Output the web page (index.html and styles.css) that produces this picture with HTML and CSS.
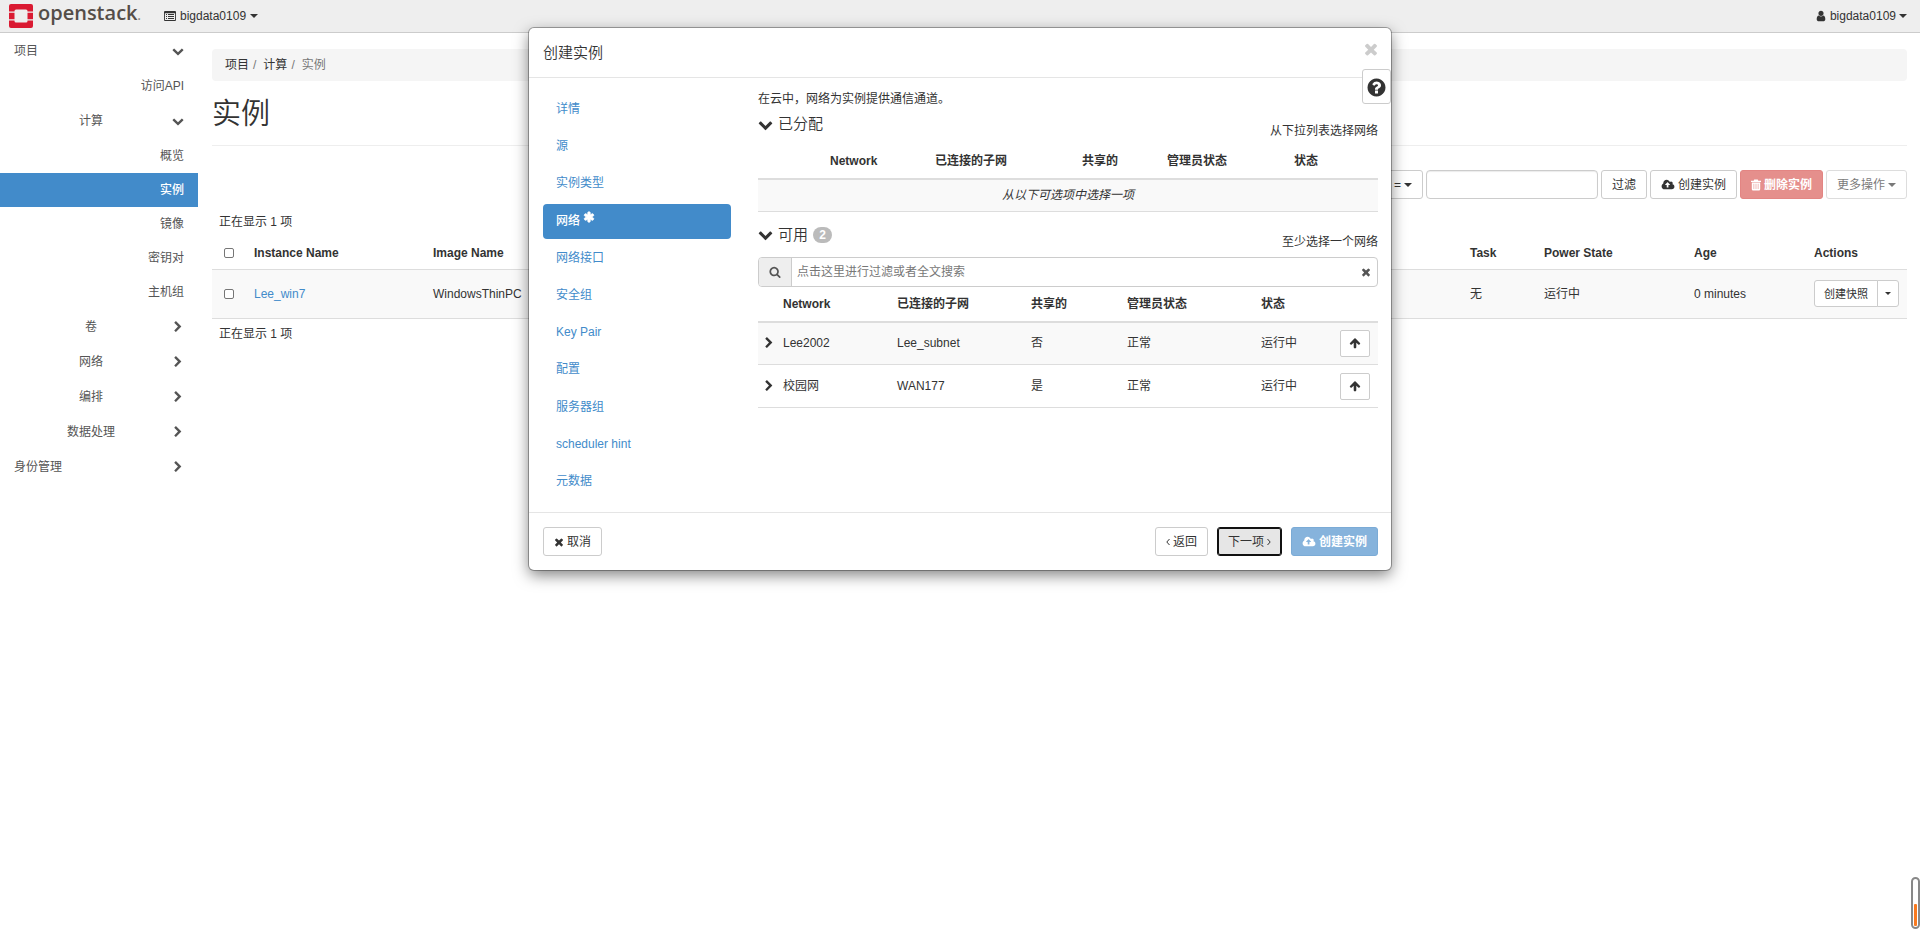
FILE: index.html
```html
<!DOCTYPE html>
<html lang="zh-CN">
<head>
<meta charset="utf-8">
<title>实例 - OpenStack Dashboard</title>
<link rel="stylesheet" href="styles.css">
</head>
<body>
<svg class="sprite" aria-hidden="true">
  <symbol id="down" viewBox="0 0 1792 1792"><path d="M1683 808l-742 741q-19 19-45 19t-45-19l-742-741q-19-19-19-45.500t19-45.500l166-165q19-19 45-19t45 19l531 531 531-531q19-19 45-19t45 19l166 165q19 19 19 45.500t-19 45.500z"/></symbol>
  <symbol id="right" viewBox="0 0 1792 1792"><path d="M1363 877l-742 742q-19 19-45 19t-45-19l-166-166q-19-19-19-45t19-45l531-531-531-531q-19-19-19-45t19-45l166-166q19-19 45-19t45 19l742 742q19 19 19 45t-19 45z"/></symbol>
  <symbol id="times" viewBox="0 0 1792 1792"><path d="M1490 1322q0 40-28 68l-136 136q-28 28-68 28t-68-28l-294-294-294 294q-28 28-68 28t-68-28l-136-136q-28-28-28-68t28-68l294-294-294-294q-28-28-28-68t28-68l136-136q28-28 68-28t68 28l294 294 294-294q28-28 68-28t68 28l136 136q28 28 28 68t-28 68l-294 294 294 294q28 28 28 68z"/></symbol>
  <symbol id="search" viewBox="0 0 1792 1792"><path d="M1216 832q0-185-131.500-316.500t-316.500-131.500-316.500 131.500-131.500 316.500 131.500 316.500 316.500 131.500 316.500-131.500 131.500-316.500zm512 832q0 52-38 90t-90 38q-54 0-90-38l-343-342q-179 124-399 124-143 0-273.500-55.500t-225-150-150-225-55.500-273.500 55.500-273.500 150-225 225-150 273.500-55.500 273.500 55.500 225 150 150 225 55.500 273.500q0 220-124 399l343 343q37 37 37 90z"/></symbol>
  <symbol id="up" viewBox="0 0 1792 1792"><path d="M1675 971q0 51-37 90l-75 75q-38 38-91 38-54 0-90-38l-294-293v704q0 52-37.500 84.500t-90.500 32.500h-128q-53 0-90.500-32.500t-37.500-84.500v-704l-294 293q-36 38-90 38t-90-38l-75-75q-38-38-38-90 0-53 38-91l651-651q35-37 90-37 54 0 91 37l651 651q37 39 37 91z"/></symbol>
  <symbol id="asterisk" viewBox="0 0 1792 1792"><path stroke="currentColor" stroke-width="100" d="M1546 1050q46 26 59.500 77.500t-12.500 97.500l-64 110q-26 46-77.500 59.500t-97.500-12.500l-266-153v307q0 52-38 90t-90 38h-128q-52 0-90-38t-38-90v-307l-266 153q-46 26-97.500 12.500t-77.500-59.500l-64-110q-26-46-12.500-97.500t59.500-77.500l266-154-266-154q-46-26-59.500-77.500t12.500-97.500l64-110q26-46 77.500-59.500t97.500 12.500l266 153v-307q0-52 38-90t90-38h128q52 0 90 38t38 90v307l266-153q46-26 97.500-12.500t77.500 59.500l64 110q26 46 12.500 97.500t-59.500 77.500l-266 154z"/></symbol>
  <symbol id="question" viewBox="0 0 1792 1792"><path d="M1024 1376v-192q0-14-9-23t-23-9h-192q-14 0-23 9t-9 23v192q0 14 9 23t23 9h192q14 0 23-9t9-23zm256-672q0-88-55.500-163t-138.500-116-170-41q-243 0-371 213-15 24 8 42l132 100q7 6 19 6 16 0 25-12 53-68 86-92 34-24 86-24 48 0 85.500 26t37.500 59q0 38-20 61t-68 45q-63 28-115.500 86.500t-52.500 125.500v36q0 14 9 23t23 9h192q14 0 23-9t9-23q0-19 21.500-49.500t54.500-49.500q32-18 49-28.500t46-35 44.500-48 28-60.500 12.500-81zm384 192q0 209-103 385.500t-279.500 279.500-385.500 103-385.500-103-279.500-279.500-103-385.500 103-385.500 279.500-279.500 385.500-103 385.500 103 279.500 279.500 103 385.500z"/></symbol>
  <symbol id="user" viewBox="0 0 1792 1792"><path d="M1536 1399q0 109-62.500 187t-150.500 78h-854q-88 0-150.500-78t-62.500-187q0-85 8.500-160.500t31.500-152 58.500-131 94-89 134.500-34.500q131 128 313 128t313-128q76 0 134.500 34.500t94 89 58.500 131 31.500 152 8.500 160.500zm-256-887q0 159-112.500 271.500t-271.500 112.500-271.500-112.500-112.500-271.500 112.500-271.500 271.500-112.500 271.500 112.500 112.500 271.500z"/></symbol>
  <symbol id="cloud" viewBox="0 0 1920 1792"><path d="M1280 864q0-14-9-23l-352-352q-9-9-23-9t-23 9l-351 351q-10 12-10 24 0 14 9 23t23 9h224v352q0 13 9.500 22.500t22.500 9.500h192q13 0 22.500-9.500t9.500-22.500v-352h224q13 0 22.500-9.500t9.500-22.500zm640 288q0 159-112.500 271.500t-271.500 112.500h-1088q-185 0-316.500-131.500t-131.500-316.500q0-130 70-240t188-165q-2-30-2-43 0-212 150-362t362-150q156 0 285.500 87t188.500 231q71-62 166-62 106 0 181 75t75 181q0 76-41 138 130 31 213.500 135.500t83.500 238.500z"/></symbol>
  <symbol id="trash" viewBox="0 0 12 12"><path fill-rule="evenodd" d="M4.200.5h3.600l.5 1.300H11v1.300H1V1.800h2.700zM1.800 3.500h8.400v6.700a1.300 1.300 0 0 1-1.300 1.300H3.100a1.300 1.300 0 0 1-1.300-1.300zM3.600 4.700V10h.6V4.700zM5.700 4.700V10h.6V4.700zM7.800 4.700V10h.6V4.700z"/></symbol>
  <symbol id="list" viewBox="0 0 12 10"><path fill-rule="evenodd" d="M1 0h10a1 1 0 0 1 1 1v8a1 1 0 0 1-1 1H1a1 1 0 0 1-1-1V1a1 1 0 0 1 1-1zM.9 2.300v6.600h10.200V2.300zM2 3.100h1v1H2zM4 3.100h6v1H4zM2 5.100h1v1H2zM4 5.100h6v1H4zM2 7.100h1v1H2zM4 7.100h6v1H4z"/></symbol>
  <symbol id="angle-left" viewBox="0 0 4 8"><path d="M3.500 1L.8 4l2.700 3" fill="none" stroke="currentColor"/></symbol>
  <symbol id="angle-right" viewBox="0 0 4 8"><path d="M.5 1l2.700 3L.5 7" fill="none" stroke="currentColor"/></symbol>
</svg>

<header class="topbar">
  <a class="brand" href="#">
    <svg class="brand-mark" viewBox="0 0 24 24" aria-hidden="true"><path fill="#da1a32" d="M2 0h20a2 2 0 0 1 2 2v5.500h-5.500V7a1.500 1.500 0 0 0-1.500-1.500H7A1.500 1.500 0 0 0 5.500 7v.5H0V2a2 2 0 0 1 2-2zM0 8.700h5.500v6.600H0zM18.500 8.700H24v6.600h-5.500zM0 16.500h5.500v.5A1.500 1.500 0 0 0 7 18.500h10a1.500 1.500 0 0 0 1.500-1.500v-.5H24V22a2 2 0 0 1-2 2H2a2 2 0 0 1-2-2z"/></svg>
    <span>openstack<small>.</small></span>
  </a>
  <button class="menu"><svg class="list-icon"><use href="#list"/></svg>bigdata0109<i class="caret"></i></button>
  <button class="menu user"><svg class="icon"><use href="#user"/></svg>bigdata0109<i class="caret"></i></button>
</header>

<div class="page">
  <nav class="sidebar" aria-label="主导航">
    <button class="row top"><span>项目</span><svg class="icon"><use href="#down"/></svg></button>
    <a class="row leaf" href="#">访问API</a>
    <button class="row group"><span>计算</span><svg class="icon"><use href="#down"/></svg></button>
    <a class="row leaf" href="#">概览</a>
    <a class="row leaf sub active" href="#">实例</a>
    <a class="row leaf sub" href="#">镜像</a>
    <a class="row leaf sub" href="#">密钥对</a>
    <a class="row leaf sub" href="#">主机组</a>
    <button class="row group"><span>卷</span><svg class="icon"><use href="#right"/></svg></button>
    <button class="row group"><span>网络</span><svg class="icon"><use href="#right"/></svg></button>
    <button class="row group"><span>编排</span><svg class="icon"><use href="#right"/></svg></button>
    <button class="row group"><span>数据处理</span><svg class="icon"><use href="#right"/></svg></button>
    <button class="row top"><span>身份管理</span><svg class="icon"><use href="#right"/></svg></button>
  </nav>

  <main class="content">
    <ol class="breadcrumb"><li><a href="#">项目</a></li><li><a href="#">计算</a></li><li>实例</li></ol>
    <h1>实例</h1>
    <div class="toolbar">
      <button class="btn">实例名称 =<i class="caret"></i></button>
      <input class="field" type="text" aria-label="过滤条件">
      <button class="btn">过滤</button>
      <button class="btn"><svg class="cloud-icon"><use href="#cloud"/></svg>创建实例</button>
      <button class="btn danger" disabled><svg class="icon"><use href="#trash"/></svg>删除实例</button>
      <button class="btn faded" disabled>更多操作<i class="caret"></i></button>
    </div>
    <p class="count">正在显示 1 项</p>
    <table class="instances">
      <colgroup><col class="c-check"><col class="c-name"><col><col class="c-task"><col class="c-power"><col class="c-age"><col class="c-actions"></colgroup>
      <thead><tr><th><input type="checkbox" aria-label="全选"></th><th>Instance Name</th><th>Image Name</th><th>Task</th><th>Power State</th><th>Age</th><th>Actions</th></tr></thead>
      <tbody><tr><td><input type="checkbox" aria-label="选择 Lee_win7"></td><td><a href="#">Lee_win7</a></td><td>WindowsThinPC</td><td>无</td><td>运行中</td><td>0 minutes</td><td><div class="split"><button class="btn small">创建快照</button><button class="btn small toggle" aria-label="更多"><i class="caret"></i></button></div></td></tr></tbody>
    </table>
    <p class="count">正在显示 1 项</p>
  </main>
</div>

<section class="modal" role="dialog" aria-labelledby="dialog-title">
  <header class="modal-head">
    <h2 id="dialog-title">创建实例</h2>
    <button class="close" aria-label="关闭"><svg class="close-icon"><use href="#times"/></svg></button>
  </header>
  <button class="help" aria-label="帮助"><svg class="help-icon"><use href="#question"/></svg></button>
  <div class="modal-body">
    <nav class="steps" aria-label="步骤">
      <a href="#">详情</a>
      <a href="#">源</a>
      <a href="#">实例类型</a>
      <a href="#" class="current">网络<svg class="star"><use href="#asterisk"/></svg></a>
      <a href="#">网络接口</a>
      <a href="#">安全组</a>
      <a href="#">Key Pair</a>
      <a href="#">配置</a>
      <a href="#">服务器组</a>
      <a href="#">scheduler hint</a>
      <a href="#">元数据</a>
    </nav>
    <div class="step">
      <p class="intro">在云中，网络为实例提供通信通道。</p>
      <div class="section-head"><h3><svg class="big-icon"><use href="#down"/></svg>已分配</h3><span>从下拉列表选择网络</span></div>
      <table class="networks allocated">
        <colgroup><col class="a-lead"><col class="a-net"><col class="a-subnet"><col class="a-shared"><col class="a-admin"><col></colgroup>
        <thead><tr><th></th><th>Network</th><th>已连接的子网</th><th>共享的</th><th>管理员状态</th><th>状态</th></tr></thead>
        <tbody><tr><td colspan="6" class="empty">从以下可选项中选择一项</td></tr></tbody>
      </table>
      <div class="section-head"><h3><svg class="big-icon"><use href="#down"/></svg>可用<span class="badge">2</span></h3><span>至少选择一个网络</span></div>
      <div class="search">
        <span class="addon"><svg class="icon"><use href="#search"/></svg></span>
        <input type="text" placeholder="点击这里进行过滤或者全文搜索" aria-label="搜索网络">
        <button class="clear" aria-label="清除"><svg class="icon"><use href="#times"/></svg></button>
      </div>
      <table class="networks available">
        <colgroup><col class="b-lead"><col class="b-net"><col class="b-subnet"><col class="b-shared"><col class="b-admin"><col><col class="b-action"></colgroup>
        <thead><tr><th></th><th>Network</th><th>已连接的子网</th><th>共享的</th><th>管理员状态</th><th>状态</th><th></th></tr></thead>
        <tbody>
          <tr><td><svg class="icon"><use href="#right"/></svg></td><td>Lee2002</td><td>Lee_subnet</td><td>否</td><td>正常</td><td>运行中</td><td><button class="btn arrow" aria-label="分配 Lee2002"><svg class="icon"><use href="#up"/></svg></button></td></tr>
          <tr><td><svg class="icon"><use href="#right"/></svg></td><td>校园网</td><td>WAN177</td><td>是</td><td>正常</td><td>运行中</td><td><button class="btn arrow" aria-label="分配 校园网"><svg class="icon"><use href="#up"/></svg></button></td></tr>
        </tbody>
      </table>
    </div>
  </div>
  <footer class="modal-foot">
    <button class="btn cancel"><svg class="icon"><use href="#times"/></svg>取消</button>
    <button class="btn"><svg class="angle"><use href="#angle-left"/></svg>返回</button>
    <button class="btn next">下一项<svg class="angle"><use href="#angle-right"/></svg></button>
    <button class="btn primary" disabled><svg class="cloud-icon"><use href="#cloud"/></svg>创建实例</button>
  </footer>
</section>

<div class="gauge" aria-hidden="true"><i></i></div>
</body>
</html>
```
FILE: styles.css
```css
* { box-sizing: border-box; }
body {
  margin: 0;
  color: #333;
  background: #fff;
  font: 12px/18px "Liberation Sans", "Noto Sans CJK SC", sans-serif;
}
button, input { font: inherit; color: inherit; }
button { margin: 0; padding: 0; border: 0; background: none; cursor: pointer; }
a { color: #428bca; text-decoration: none; }
h1, h2, h3, p { margin: 0; font-weight: normal; }
h1, h2, h3 { font-weight: 350; }
svg { fill: currentColor; flex: none; display: block; }
.sprite { position: absolute; width: 0; height: 0; }
.icon { width: 12px; height: 12px; }
.cloud-icon { width: 14px; height: 12px; }
.caret { border: 4px solid transparent; border-top-color: currentColor; border-bottom: 0; }

.topbar {
  display: flex;
  align-items: center;
  height: 33px;
  padding: 0 13px 0 9px;
  background: #eee;
  border-bottom: 1px solid #ccc;
}
.brand { display: flex; align-items: center; gap: 5px; width: 155px; height: 32px; color: #554d48; font: 600 20px/24px "Open Sans", sans-serif; }
.brand span { padding-bottom: 3px; }
.brand small { color: #8a8480; font-size: 12px; }
.brand-mark { width: 24px; height: 24px; }
.menu { display: flex; align-items: center; gap: 4px; height: 26px; }
.list-icon { width: 12px; height: 10px; }
.user { margin-left: auto; gap: 3px; }

.page { display: flex; }
.sidebar { display: flex; flex-direction: column; flex: none; width: 198px; }
.row { display: flex; align-items: center; height: 35px; padding: 0 14px; color: #555; }
.top { justify-content: space-between; }
.group { padding-left: 10px; }
.group span { flex: 1; text-align: center; }
.leaf { justify-content: flex-end; }
.sub { height: 34px; }
.active { color: #fff; background: #428bca; font-weight: 500; }

.content { flex: 1; min-width: 0; padding: 16px 13px 0 14px; }
.breadcrumb { display: flex; margin: 0; padding: 7px 13px; list-style: none; color: #777; background: #f5f5f5; border-radius: 4px; }
.breadcrumb a { color: #333; }
.breadcrumb li + li::before { content: "/"; padding: 0 7px 0 4px; color: #777; }
h1 { padding: 11px 0 9px; font-size: 29px; line-height: 44px; border-bottom: 1px solid #eee; }
.toolbar { display: flex; justify-content: flex-end; gap: 3px; margin: 24px 0 14px; }
.btn {
  display: flex;
  align-items: center;
  justify-content: center;
  gap: 3px;
  height: 29px;
  padding: 0 10px;
  border: 1px solid #ccc;
  border-radius: 3px;
  background: #fff;
}
.btn .icon { margin: 0 -1px; }
.field { width: 172px; height: 29px; border: 1px solid #ccc; border-radius: 4px; box-shadow: inset 0 1px 1px rgba(0, 0, 0, .08); }
.danger { color: #fff; background: #e58f8c; border-color: #e38583; font-weight: bold; }
.faded { opacity: .65; }
.count { padding: 0 7px; }

table { width: 100%; table-layout: fixed; border-collapse: collapse; }
th { font-weight: bold; text-align: left; white-space: nowrap; }
th, td { padding: 0 7px; }
tbody tr:nth-child(odd) { background: #f9f9f9; }
.instances thead tr { height: 38px; }
.instances tbody tr { height: 49px; }
.instances tr { border-bottom: 1px solid #ddd; }
.instances th { padding-top: 7px; }
.instances + .count { padding-top: 6px; }
.instances th:first-child, .instances td:first-child { padding-left: 12px; }
.instances input {
  display: block;
  appearance: none;
  width: 10px;
  height: 10px;
  margin: 0;
  border: 1px solid #767676;
  border-radius: 2px;
  background: #fff;
}
.c-check { width: 35px; }
.c-name { width: 179px; }
.c-task { width: 74px; }
.c-power { width: 150px; }
.c-age { width: 120px; }
.c-actions { width: 100px; }
.split { display: flex; }
.small { height: 27px; padding: 0 9px; font-size: 11px; border-radius: 3px 0 0 3px; white-space: nowrap; }
.toggle { width: 22px; padding: 0; margin-left: -1px; border-radius: 0 3px 3px 0; }
.toggle .caret { border-width: 3px; border-bottom: 0; }

.modal {
  position: absolute;
  top: 28px;
  left: 0;
  right: 0;
  width: 862px;
  margin: 0 auto;
  background: #fff;
  border-radius: 5px;
  box-shadow: 0 0 0 1px rgba(0, 0, 0, .3), 0 5px 15px rgba(0, 0, 0, .5);
}
.modal-head { display: flex; justify-content: space-between; padding: 14px 13px 14px 14px; border-bottom: 1px solid #e5e5e5; }
h2 { font-size: 15px; line-height: 21px; }
.close { display: flex; width: 14px; height: 14px; color: #ccc; }
.close-icon { width: 18px; height: 18px; margin: -2px; }
.help {
  position: absolute;
  top: 41px;
  right: 0;
  display: flex;
  align-items: center;
  justify-content: center;
  width: 29px;
  height: 35px;
  padding-top: 1px;
  border: 1px solid #ccc;
  border-radius: 3px;
  background: #fff;
}
.help-icon { width: 21px; height: 21px; }
.modal-body { display: flex; gap: 27px; padding: 14px 13px 13px 14px; }
.steps { display: flex; flex-direction: column; justify-content: space-between; width: 188px; }
.steps a { display: flex; gap: 3px; height: 35px; padding: 8px 13px 9px; border-radius: 4px; }
.steps .current { color: #fff; background: #428bca; font-weight: 500; }
.star { width: 12px; height: 12px; margin-top: -1px; }
.step { flex: 1; min-width: 0; min-height: 407px; }
.intro { padding-bottom: 4px; line-height: 14px; }
.section-head { display: flex; justify-content: space-between; align-items: flex-end; height: 34px; padding-bottom: 4px; }
h3 { display: flex; align-items: center; gap: 5px; align-self: flex-start; padding-top: 4px; font-size: 15px; line-height: 20px; }
.big-icon { width: 15px; height: 15px; }
.badge { min-width: 19px; padding: 0 6px; color: #fff; background: #bbb; border-radius: 8px; font-size: 12px; line-height: 16px; font-weight: bold; text-align: center; }
.networks thead tr { height: 35px; border-bottom: 2px solid #ddd; }
.networks tbody tr { border-bottom: 1px solid #ddd; }
.allocated { margin-bottom: 9px; }
.allocated tbody tr { height: 32px; }
.empty { text-align: center; font-style: italic; }
.available tbody tr { height: 43px; }
.available td:last-child { padding: 0 8px 0 0; }
.a-lead { width: 65px; }
.a-net { width: 105px; }
.a-subnet { width: 147px; }
.a-shared { width: 85px; }
.a-admin { width: 127px; }
.b-lead { width: 18px; }
.b-net { width: 114px; }
.b-subnet { width: 134px; }
.b-shared { width: 96px; }
.b-admin { width: 134px; }
.b-action { width: 38px; }
.available td:first-child { padding: 0 0 0 5px; }
.arrow { width: 30px; height: 27px; padding: 0; border-radius: 2px; }
.search { display: flex; height: 30px; margin-top: 2px; border: 1px solid #ccc; border-radius: 4px; overflow: hidden; }
.addon { display: flex; align-items: center; justify-content: center; width: 33px; color: #555; background: #eee; border-right: 1px solid #ccc; }
.search input { flex: 1; min-width: 0; padding: 0 5px; border: 0; background: none; }
.search input::placeholder { color: #777; }
.clear { display: flex; align-items: center; justify-content: center; width: 22px; color: #555; }
.modal-foot { display: flex; gap: 9px; padding: 14px 13px 14px 14px; border-top: 1px solid #e5e5e5; }
.cancel { margin-right: auto; }
.angle { width: 4px; height: 8px; }
.next { background: #e6e6e6; border-color: #111; outline: 1px solid #111; outline-offset: -2px; }
.primary { color: #fff; background: #86b3dc; border-color: #7babd6; font-weight: bold; }

.gauge { position: fixed; right: 0; bottom: 17px; display: flex; align-items: flex-end; justify-content: center; width: 9px; height: 52px; padding-bottom: 1px; border: 2px solid #888; border-radius: 5px; background: #fff; }
.gauge i { width: 3px; height: 22px; background: #f97a1f; border-radius: 1px; }
```
